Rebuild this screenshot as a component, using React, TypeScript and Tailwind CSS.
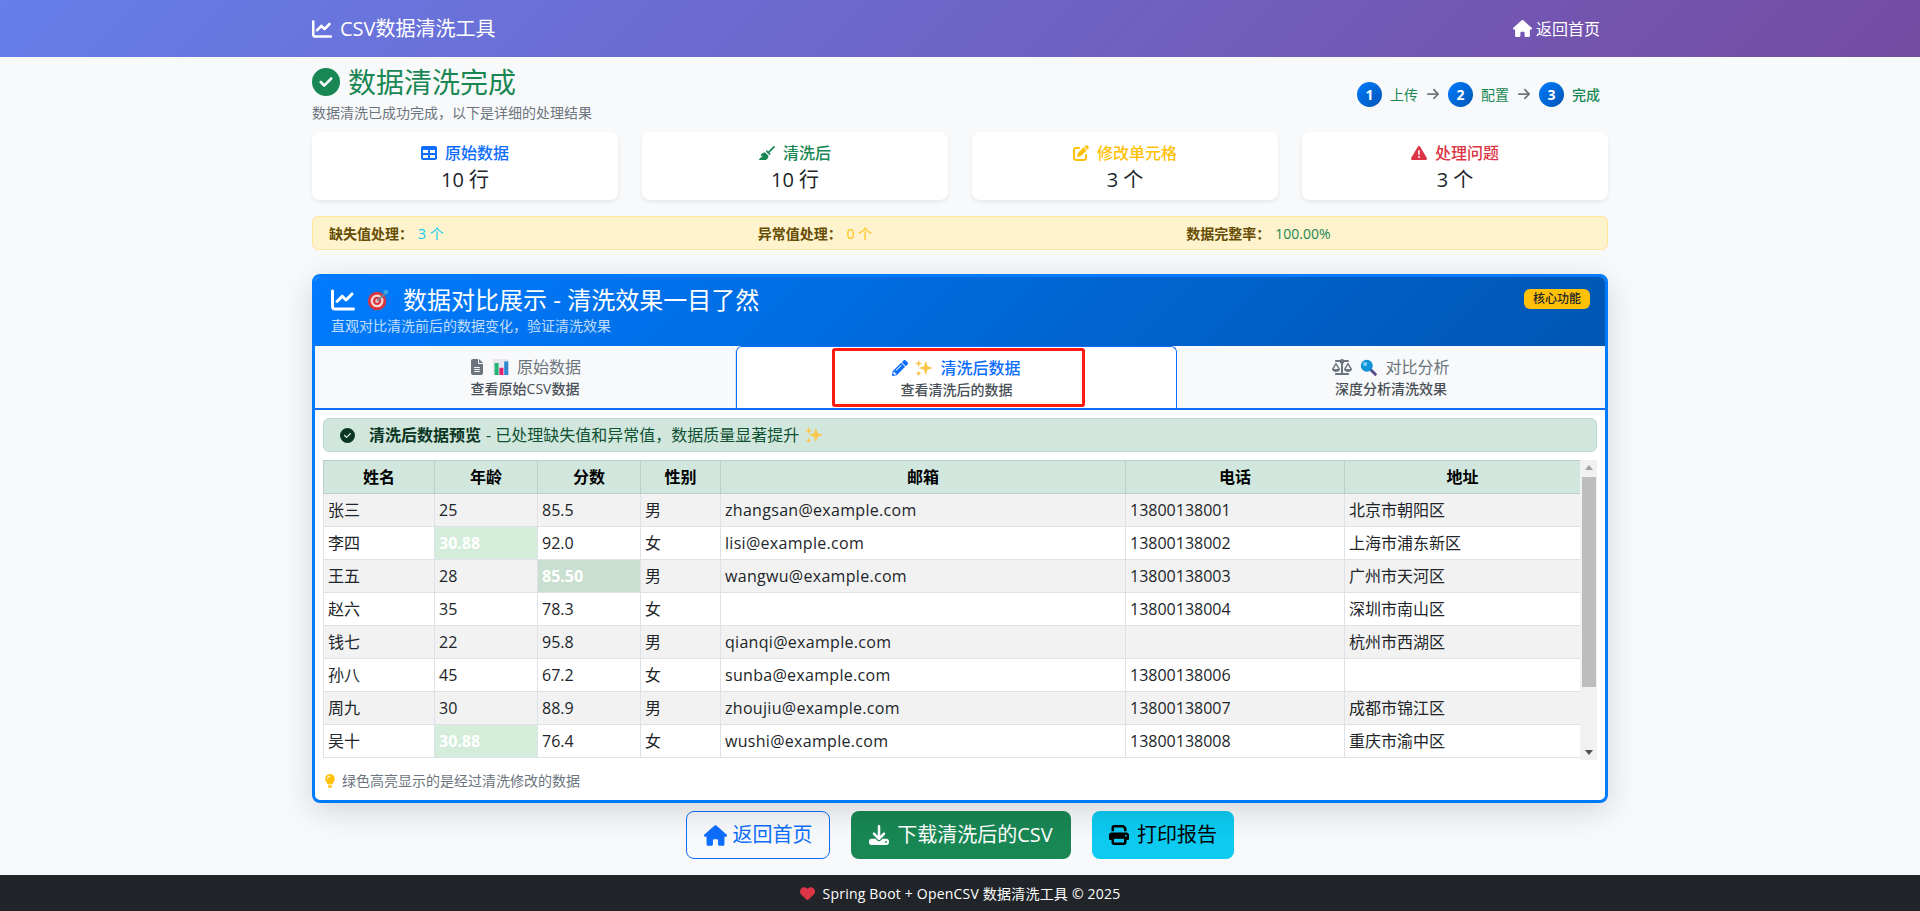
import { FaChartLine, FaCircleCheck, FaTable, FaBroom, FaPenToSquare, FaTriangleExclamation, FaHouse, FaArrowRight, FaFileLines, FaScaleBalanced, FaLightbulb, FaDownload, FaPrint, FaHeart } from 'react-icons/fa6';
import { FaPencilAlt } from 'react-icons/fa';

const FONT = 'font-["Open_Sans","Noto_Sans_CJK_SC",sans-serif]';

const Target = () => (
  <svg viewBox="0 0 24 24" className="w-[22px] h-[22px] inline-block">
    <circle cx="11" cy="13" r="10" fill="#d9363e" />
    <circle cx="11" cy="13" r="7" fill="#f6d7d4" />
    <circle cx="11" cy="13" r="4.5" fill="#d9363e" />
    <circle cx="11" cy="13" r="2" fill="#f6d7d4" />
    <path d="M11 13 L21 4" stroke="#6d8796" strokeWidth="2" />
    <path d="M19 1 L23 1 L23 5 L20 6 L18 4 Z" fill="#3ea6e0" />
  </svg>
);

const Bars = () => (
  <svg viewBox="0 0 20 20" className="w-[16px] h-[16px] inline-block">
    <rect x="0" y="0" width="20" height="20" rx="1" fill="#e9e6f0" />
    <rect x="2" y="5" width="5" height="15" fill="#1fb573" />
    <rect x="8" y="11" width="5" height="9" fill="#e0246f" />
    <rect x="14" y="3" width="5" height="17" fill="#2d8ad2" />
  </svg>
);

const Sparkles = () => (
  <svg viewBox="0 0 20 20" className="w-[18px] h-[18px] inline-block">
    <path d="M12 2 L14 8 L20 10 L14 12 L12 18 L10 12 L4 10 L10 8 Z" fill="#fbc64a" />
    <path d="M4 1 L5 4 L8 5 L5 6 L4 9 L3 6 L0 5 L3 4 Z" fill="#fbc64a" />
    <path d="M4 13 L5 15 L7 16 L5 17 L4 19 L3 17 L1 16 L3 15 Z" fill="#fbc64a" />
  </svg>
);

const Magnifier = () => (
  <svg viewBox="0 0 20 20" className="w-[17px] h-[17px] inline-block">
    <path d="M12 12 L18 18" stroke="#5b4a8a" strokeWidth="3.5" strokeLinecap="round" />
    <circle cx="8" cy="8" r="7" fill="#1193d8" />
    <circle cx="6" cy="6" r="2.5" fill="#7cd0f5" />
  </svg>
);

const stats = [
  { icon: <FaTable />, label: '原始数据', value: '10 行', color: 'text-[#0d6efd]' },
  { icon: <FaBroom />, label: '清洗后', value: '10 行', color: 'text-[#198754]' },
  { icon: <FaPenToSquare />, label: '修改单元格', value: '3 个', color: 'text-[#ffc107]' },
  { icon: <FaTriangleExclamation />, label: '处理问题', value: '3 个', color: 'text-[#dc3545]' },
];

const rows = [
  ['张三', '25', '85.5', '男', 'zhangsan@example.com', '13800138001', '北京市朝阳区'],
  ['李四', '30.88', '92.0', '女', 'lisi@example.com', '13800138002', '上海市浦东新区'],
  ['王五', '28', '85.50', '男', 'wangwu@example.com', '13800138003', '广州市天河区'],
  ['赵六', '35', '78.3', '女', '', '13800138004', '深圳市南山区'],
  ['钱七', '22', '95.8', '男', 'qianqi@example.com', '', '杭州市西湖区'],
  ['孙八', '45', '67.2', '女', 'sunba@example.com', '13800138006', ''],
  ['周九', '30', '88.9', '男', 'zhoujiu@example.com', '13800138007', '成都市锦江区'],
  ['吴十', '30.88', '76.4', '女', 'wushi@example.com', '13800138008', '重庆市渝中区'],
];

const heads = ['姓名', '年龄', '分数', '性别', '邮箱', '电话', '地址'];
const widths = ['w-[111px]', 'w-[103px]', 'w-[103px]', 'w-[80px]', 'w-[405px]', 'w-[219px]', 'w-[236px]'];

const Step = ({ n, label, bold }: { n: number; label: string; bold?: boolean }) => (
  <div className="flex items-center">
    <span className="w-[25px] h-[25px] rounded-full bg-[linear-gradient(135deg,#007bff,#0056b3)] text-white text-[14px] font-bold flex items-center justify-center">{n}</span>
    <span className={`ml-[8px] text-[14px] text-[#198754] ${bold ? 'font-medium' : ''}`}>{label}</span>
  </div>
);

export default function App() {
  return (
    <div className={`h-[911px] overflow-hidden flex flex-col bg-[#f8f9fa] text-[#212529] ${FONT}`}>
      <header className="h-[57px] shrink-0 bg-[linear-gradient(135deg,#667eea_0%,#764ba2_100%)] text-white">
        <div className="w-[1296px] mx-auto h-full flex items-center justify-between">
          <div className="flex items-center gap-[8px] text-[20px]"><FaChartLine className="text-[20px]" />CSV数据清洗工具</div>
          <div className="flex items-center gap-[4px] text-[16px] pr-[8px]"><FaHouse className="text-[19px]" />返回首页</div>
        </div>
      </header>

      <main className="w-[1296px] mx-auto flex-1">
        <div className="flex justify-between h-[75px]">
          <div className="pt-[6px]">
            <h1 className="flex items-center gap-[8px] text-[#198754] text-[28px] leading-[38px]"><FaCircleCheck className="text-[28px]" />数据清洗完成</h1>
            <p className="text-[14px] text-[#6c757d] mt-[1px] leading-[21px]">数据清洗已成功完成，以下是详细的处理结果</p>
          </div>
          <div className="flex items-center gap-[8px] mt-[12px] h-[50px] pr-[8px]">
            <Step n={1} label="上传" />
            <FaArrowRight className="text-[14px] text-[#6c757d]" />
            <Step n={2} label="配置" />
            <FaArrowRight className="text-[14px] text-[#6c757d]" />
            <Step n={3} label="完成" bold />
          </div>
        </div>

        <div className="grid grid-cols-4 gap-[24px]">
          {stats.map((s) => (
            <div key={s.label} className="h-[68px] bg-white rounded-[8px] shadow-[0_2px_4px_rgba(0,0,0,0.075)] flex flex-col items-center pt-[9px]">
              <div className={`flex items-center gap-[8px] text-[16px] font-medium leading-[24px] ${s.color}`}>{s.icon}{s.label}</div>
              <div className="text-[20px] leading-[29px]">{s.value}</div>
            </div>
          ))}
        </div>

        <div className="mt-[16px] h-[34px] flex items-center bg-[#fff3cd] border border-[#ffe69c] rounded-[6px] px-[16px] text-[14px] overflow-hidden">
          <div className="grid grid-cols-3 w-[1286px] shrink-0">
            <div><b className="font-bold text-[#664d03]">缺失值处理：</b><span className="ml-[5px] text-[#0dcaf0]">3 个</span></div>
            <div><b className="font-bold text-[#664d03]">异常值处理：</b><span className="ml-[5px] text-[#ffc107]">0 个</span></div>
            <div><b className="font-bold text-[#664d03]">数据完整率：</b><span className="ml-[5px] text-[#198754]">100.00%</span></div>
          </div>
        </div>

        <section className="relative mt-[24px] h-[529px] bg-white border-[3px] border-[#007bff] rounded-[8px] shadow-[0_8px_32px_rgba(0,0,0,0.15)]">
          <div className="h-[69px] bg-[linear-gradient(135deg,#007bff,#0056b3)] rounded-t-[5px] text-white pl-[16px] pr-[15px] pt-[6px] flex justify-between">
            <div>
              <div className="flex items-center text-[24px] leading-[34px]"><FaChartLine className="mr-[12px]" /><Target /><span className="ml-[14px]">数据对比展示 - 清洗效果一目了然</span></div>
              <div className="text-[14px] opacity-75 leading-[18px]">直观对比清洗前后的数据变化，验证清洗效果</div>
            </div>
            <span className="self-start mt-[6px] h-[20px] px-[9px] rounded-[6px] bg-[#ffc107] text-[#212529] text-[12px] font-medium flex items-center">核心功能</span>
          </div>

          <div className="relative h-[64px] flex border-b-[2px] border-[#0d6efd] text-center">
            <div className="w-[421px] bg-[#f8f9fa] border-r border-[#dee2e6] rounded-tr-[6px] pt-[9px] text-[#6c757d]">
              <div className="flex items-center justify-center gap-[8px] text-[16px] leading-[24px]"><FaFileLines className="text-[16px]" /><Bars />原始数据</div>
              <div className="text-[14px] font-medium text-[#495057] leading-[20px]">查看原始CSV数据</div>
            </div>
            <div className="w-[441px] bg-white border border-b-0 border-[#0d6efd] rounded-t-[6px] pt-[9px] text-[#0d6efd]">
              <div className="flex items-center justify-center gap-[7px] text-[16px] font-medium leading-[24px]"><FaPencilAlt className="text-[16px]" /><Sparkles />清洗后数据</div>
              <div className="text-[14px] font-medium text-[#495057] leading-[20px]">查看清洗后的数据</div>
            </div>
            <div className="flex-1 bg-[#f8f9fa] rounded-tl-[6px] pt-[9px] text-[#6c757d]">
              <div className="flex items-center justify-center gap-[8px] text-[16px] leading-[24px]"><FaScaleBalanced className="text-[20px]" /><Magnifier />对比分析</div>
              <div className="text-[14px] font-medium text-[#495057] leading-[20px]">深度分析清洗效果</div>
            </div>
            <div className="absolute left-[517px] top-[2px] w-[253px] h-[59px] border-[3px] border-[#ff1a12] rounded-[3px]" />
          </div>

          <div className="px-[8px] pt-[8px]">
            <div className="h-[34px] flex items-center bg-[#d1e7dd] border border-[#badbcc] rounded-[6px] px-[16px] text-[16px] text-[#0f5132]">
              <FaCircleCheck className="text-[15px] mr-[14px] text-[#0a3622]" />
              <b className="font-bold text-[#0a3622]">清洗后数据预览</b>
              <span className="ml-[5px]">- 已处理缺失值和异常值，数据质量显著提升</span>
              <span className="ml-[6px] flex"><Sparkles /></span>
            </div>

            <div className="mt-[8px] h-[300px] flex overflow-hidden">
              <div className="w-[1257px] overflow-hidden">
                <table className="table-fixed border-collapse w-[1257px] text-[16px]">
                  <thead>
                    <tr className="h-[33px] bg-[#d1e7dd]">
                      {heads.map((h, i) => (
                        <th key={h} className={`${widths[i]} border border-[#bcd0c7] font-bold text-center text-black p-0`}>{h}</th>
                      ))}
                    </tr>
                  </thead>
                  <tbody>
                    {rows.map((r, ri) => (
                      <tr key={r[0]} className={`h-[33px] ${ri % 2 === 0 ? 'bg-[#f2f2f2]' : 'bg-white'}`}>
                        {r.map((c, ci) => {
                          const changed = c === '30.88' || c === '85.50';
                          const shade = c === '85.50' ? 'bg-[#c9dfd0]' : 'bg-[#d4edda]';
                          return (
                            <td key={ci} className={`border border-[#dee2e6] px-[4px] py-0 ${ci === 4 ? 'tracking-[0.3px]' : ''} ${changed ? `${shade} text-white font-bold` : ''}`}>{c}</td>
                          );
                        })}
                      </tr>
                    ))}
                  </tbody>
                </table>
              </div>
              <div className="w-[17px] bg-[#f1f1f1] flex flex-col items-center justify-between py-[5px] relative">
                <span className="w-0 h-0 border-x-[4px] border-x-transparent border-b-[5px] border-b-[#a3a3a3]" />
                <span className="w-0 h-0 border-x-[4px] border-x-transparent border-t-[5px] border-t-[#505050]" />
                <div className="absolute top-[17px] left-[2px] w-[14px] h-[210px] bg-[#bdbdbd]" />
              </div>
            </div>

            <div className="mt-[10px] flex items-center text-[14px] leading-[21px] text-[#6c757d]"><FaLightbulb className="text-[#ffc107] text-[14px] mr-[5px]" />绿色高亮显示的是经过清洗修改的数据</div>
          </div>
        </section>

        <div className="mt-[8px] flex justify-center gap-[21px] text-[20px]">
          <div className="h-[48px] w-[144px] border border-[#0d6efd] rounded-[8px] text-[#0d6efd] flex items-center justify-center gap-[6px]"><FaHouse className="text-[23px]" />返回首页</div>
          <div className="h-[48px] w-[220px] bg-[#198754] rounded-[8px] text-white flex items-center justify-center gap-[8px]"><FaDownload />下载清洗后的CSV</div>
          <div className="h-[48px] w-[142px] bg-[#0dcaf0] rounded-[8px] text-black flex items-center justify-center gap-[8px]"><FaPrint />打印报告</div>
        </div>
      </main>

      <footer className="h-[36px] shrink-0 bg-[#212529] text-white text-[14px] tracking-[0.2px] flex items-center justify-center gap-[8px]"><FaHeart className="text-[#dc3545] text-[15px]" />Spring Boot + OpenCSV 数据清洗工具 © 2025</footer>
    </div>
  );
}
